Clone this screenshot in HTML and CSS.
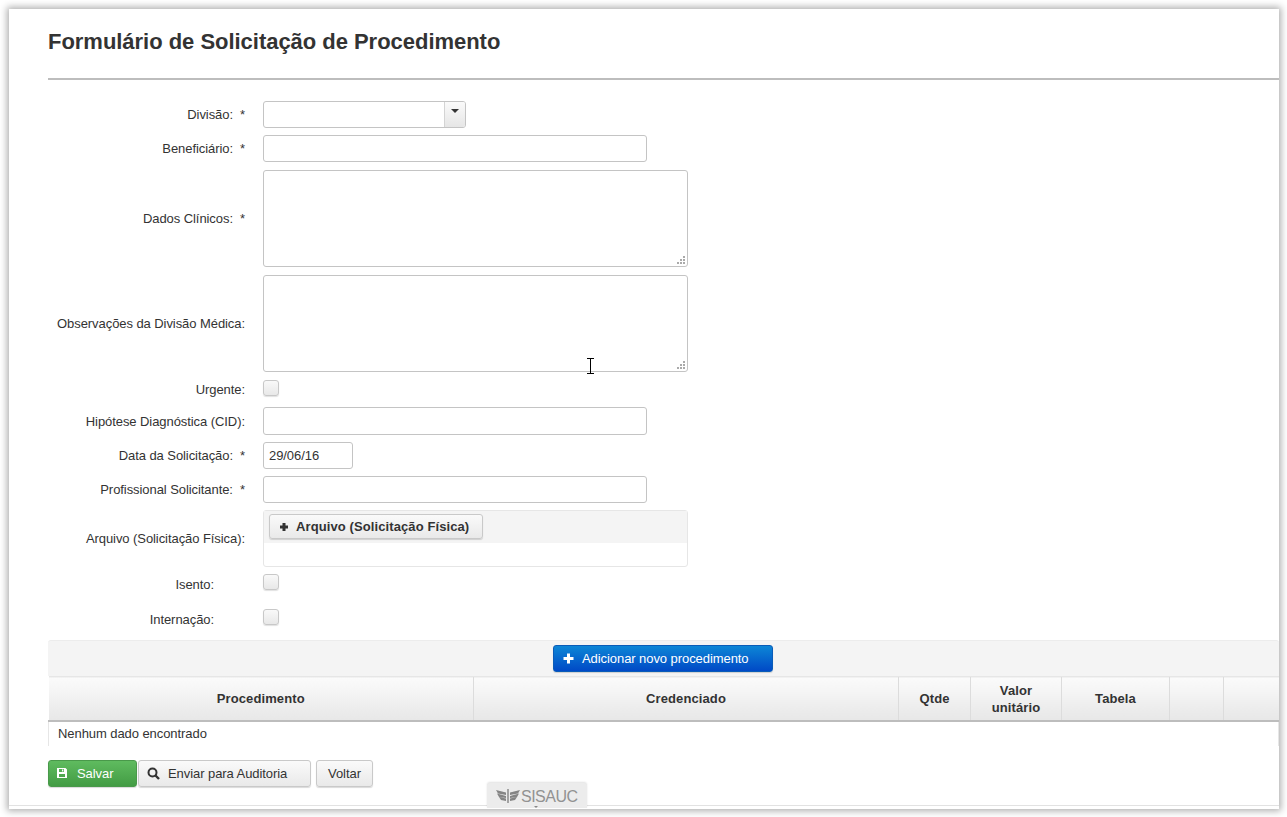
FILE: index.html
```html
<!DOCTYPE html>
<html>

<head>
    <meta charset="UTF-8">
    <title>Formulário de Solicitação de Procedimento</title>
    <link rel="stylesheet" href="styles.css">
</head>

<body>
    <div class="window">
        <h1 class="page-title">Formulário de Solicitação de Procedimento</h1>
        <div class="title-rule"></div>

        <div class="form-row">
            <label class="field-label">Divisão: &nbsp;*</label>
            <div class="combo">
                <div class="combo-text"></div>
                <div class="combo-trigger"><span class="caret"></span></div>
            </div>
        </div>
        <div class="form-row">
            <label class="field-label">Beneficiário: &nbsp;*</label>
            <input class="text-input" type="text">
        </div>
        <div class="form-row area-row">
            <label class="field-label">Dados Clínicos: &nbsp;*</label>
            <div class="area-wrap">
                <textarea class="text-area"></textarea>
                <svg class="grip" width="9" height="9" viewBox="0 0 9 9">
                    <path fill="#aaa" d="M6 0h2v2H6zM3 3h2v2H3zM6 3h2v2H6zM0 6h2v2H0zM3 6h2v2H3zM6 6h2v2H6z"/>
                </svg>
            </div>
        </div>
        <div class="form-row area-row">
            <label class="field-label">Observações da Divisão Médica:</label>
            <div class="area-wrap">
                <textarea class="text-area"></textarea>
                <svg class="grip" width="9" height="9" viewBox="0 0 9 9">
                    <path fill="#aaa" d="M6 0h2v2H6zM3 3h2v2H3zM6 3h2v2H6zM0 6h2v2H0zM3 6h2v2H3zM6 6h2v2H6z"/>
                </svg>
            </div>
        </div>
        <div class="form-row check-row">
            <label class="field-label">Urgente:</label>
            <div class="checkbox"></div>
        </div>
        <div class="form-row">
            <label class="field-label">Hipótese Diagnóstica (CID):</label>
            <input class="text-input tall-input" type="text">
        </div>
        <div class="form-row">
            <label class="field-label">Data da Solicitação: &nbsp;*</label>
            <input class="text-input date-input" type="text" value="29/06/16">
        </div>
        <div class="form-row">
            <label class="field-label">Profissional Solicitante: &nbsp;*</label>
            <input class="text-input" type="text">
        </div>
        <div class="form-row">
            <label class="field-label">Arquivo (Solicitação Física):</label>
            <div class="upload">
                <div class="upload-bar">
                    <button class="btn btn-upload">
                        <svg width="10" height="10" viewBox="0 0 10 10">
                            <path fill="#333" d="M3.5 1h3v2.5H9v3H6.5V9h-3V6.5H1v-3h2.5z"/>
                        </svg>
                        Arquivo (Solicitação Física)
                    </button>
                </div>
                <div class="upload-body"></div>
            </div>
        </div>
        <div class="form-row check-row sub-row">
            <label class="field-label short-label">Isento:</label>
            <div class="checkbox"></div>
        </div>
        <div class="form-row check-row sub-row last-row">
            <label class="field-label short-label">Internação:</label>
            <div class="checkbox"></div>
        </div>

        <div class="datatable">
            <div class="datatable-bar">
                <button class="btn btn-blue">
                    <svg width="11" height="11" viewBox="0 0 11 11">
                        <path fill="#fff" d="M4 0.5h3v3.5h3.500v3H7v3.500H4V7H0.500V4H4z"/>
                    </svg>
                    Adicionar novo procedimento
                </button>
            </div>
            <table class="grid">
                <colgroup>
                    <col class="col-proc">
                    <col class="col-cred">
                    <col class="col-qtde">
                    <col class="col-valor">
                    <col class="col-tabela">
                    <col class="col-act">
                    <col>
                </colgroup>
                <thead>
                    <tr>
                        <th>Procedimento</th>
                        <th>Credenciado</th>
                        <th>Qtde</th>
                        <th>Valor unitário</th>
                        <th>Tabela</th>
                        <th></th>
                        <th></th>
                    </tr>
                </thead>
                <tbody>
                    <tr>
                        <td colspan="7">Nenhum dado encontrado</td>
                    </tr>
                </tbody>
            </table>
        </div>

        <div class="actions">
            <button class="btn btn-green">
                <svg width="12" height="12" viewBox="0 0 12 12">
                    <path fill="#fff" fill-rule="evenodd" d="M1 1h8.500L11 2.500V11H1zM3 2v3h5V2zM3 7v3h6V7zM6 2.500h1.300v2H6z"/>
                </svg>
                Salvar
            </button>
            <button class="btn btn-search">
                <svg width="13" height="13" viewBox="0 0 13 13">
                    <circle cx="5.500" cy="5.500" r="4" fill="none" stroke="#333" stroke-width="2"/>
                    <path stroke="#333" stroke-width="2.400" d="M8.500 8.500L12 12"/>
                </svg>
                Enviar para Auditoria
            </button>
            <button class="btn btn-back">Voltar</button>
        </div>

        <div class="foot-line"></div>
    </div>

    <!-- aba fixa do rodape -->
    <div class="brand-tab">
        <svg width="24" height="14" viewBox="0 0 24 14">
            <path fill="#858585" d="M0 1l10 2.500v2.500L2 4.500zM1 4.500l9 2.500v2L3 8zM3 8l7 1.500V12L5 11z"/>
            <path fill="#858585" d="M24 1L14 3.500v2.500l8-1.500zM23 4.500L14 7v2l7-1zM21 8l-7 1.500V12l5-1z"/>
            <path fill="#858585" d="M11.300 0h1.400v14h-1.400z"/>
        </svg>
        <span>SISAUC</span>
        <i class="brand-caret"></i>
    </div>

    <!-- cursor do mouse -->
    <svg class="ibeam" width="7" height="16" viewBox="0 0 7 16">
        <path fill="none" stroke="#000" d="M0 .5h7M3.500 .5v15M0 15.500h7"/>
    </svg>
</body>

</html>
```

FILE: styles.css
```css
html, body {
    margin: 0;
    padding: 0;
    background: #fff;
    overflow: hidden;
}

body {
    height: 817px;
    font-family: "Liberation Sans", Arial, sans-serif;
    font-size: 13px;
    letter-spacing: -0.07px;
    color: #333;
}

.window {
    box-sizing: border-box;
    width: 1270px;
    height: 800px;
    margin: 9px 0 0 9px;
    padding-left: 39px;
    background: #fff;
    box-shadow: 0 0 7px 2px rgba(0, 0, 0, 0.32);
    position: relative;
}

.page-title {
    margin: 0;
    padding-top: 20px;
    height: 50px;
    box-sizing: border-box;
    font-size: 22px;
    line-height: 26px;
    font-weight: bold;
    letter-spacing: -0.03px;
    color: #333;
}

.title-rule {
    height: 2px;
    margin-top: 19px;
    margin-bottom: 21px;
    background: #bdbdbd;
}

.form-row {
    display: flex;
    align-items: center;
    gap: 18px;
    margin-bottom: 7px;
}

.area-row {
    margin-top: 8px;
}

.field-label {
    width: 197px;
    flex-shrink: 0;
    text-align: right;
    white-space: nowrap;
}

.short-label {
    width: 166px;
    margin-right: 31px;
}

.text-input {
    box-sizing: border-box;
    width: 384px;
    height: 27px;
    padding: 0 5px;
    border: 1px solid #c4c4c4;
    border-radius: 3px;
    background: #fff;
    font-family: inherit;
    font-size: 13px;
    letter-spacing: inherit;
    color: #333;
    outline: none;
}

.tall-input {
    height: 28px;
}

.date-input {
    width: 90px;
}

.combo {
    box-sizing: border-box;
    display: flex;
    width: 203px;
    height: 27px;
    border: 1px solid #c4c4c4;
    border-radius: 3px;
    overflow: hidden;
}

.combo-text {
    flex: 1;
}

.combo-trigger {
    width: 21px;
    border-left: 1px solid #d4d4d4;
    background: linear-gradient(#fafafa, #e6e6e6);
    display: flex;
    justify-content: center;
    padding-top: 7px;
    box-sizing: border-box;
}

.caret {
    width: 0;
    height: 0;
    border-left: 4px solid transparent;
    border-right: 4px solid transparent;
    border-top: 4px solid #333;
}

.area-wrap {
    position: relative;
    width: 425px;
    height: 97px;
}

.text-area {
    display: block;
    box-sizing: border-box;
    width: 100%;
    height: 100%;
    border: 1px solid #c4c4c4;
    border-radius: 3px;
    resize: none;
    outline: none;
}

.grip {
    position: absolute;
    right: 2px;
    bottom: 2px;
}

.check-row {
    height: 17px;
    margin-bottom: 10px;
    margin-top: 8px;
}

.check-row .field-label {
    padding-top: 2px;
}

.checkbox {
    box-sizing: border-box;
    width: 16px;
    height: 16px;
    margin-bottom: 1px;
    border: 1px solid #c8c8c8;
    border-radius: 3px;
    background: linear-gradient(#f9f9f9, #e8e8e8);
    box-shadow: 0 1px 1px rgba(0, 0, 0, 0.12);
}

.sub-row {
    margin-top: 0;
    margin-bottom: 18px;
}

.sub-row .field-label {
    padding-top: 4px;
}

.last-row {
    margin-bottom: 14px;
}

.upload {
    width: 425px;
    box-sizing: border-box;
    height: 57px;
    border: 1px solid #e6e6e6;
    border-radius: 3px;
}

.upload-bar {
    height: 32px;
    box-sizing: border-box;
    padding: 3px 0 0 5px;
    background: #f4f4f4;
}

.btn {
    box-sizing: border-box;
    display: inline-flex;
    align-items: center;
    height: 27px;
    padding: 0;
    border: 1px solid #c9c9c9;
    border-radius: 3px;
    background: linear-gradient(#fafafa, #e9e9e9);
    box-shadow: 0 1px 1px rgba(0, 0, 0, 0.15);
    font-family: inherit;
    font-size: 13px;
    letter-spacing: inherit;
    color: #333;
}

.btn-upload {
    width: 214px;
    height: 25px;
    padding-left: 9px;
    gap: 7px;
    font-size: 13px;
    font-weight: bold;
    letter-spacing: 0.1px;
}

.datatable-bar {
    height: 36px;
    box-sizing: border-box;
    padding: 4px 1px 0 0;
    background: #f4f4f4;
    border-top: 1px solid #ececec;
    border-radius: 3px 3px 0 0;
    display: flex;
    justify-content: center;
}

.btn-blue {
    width: 220px;
    padding-left: 9px;
    gap: 8px;
    border-color: #0a5cb8;
    background: linear-gradient(#0d86d6, #0049c6);
    color: #fff;
}

.grid {
    width: 100%;
    border-collapse: collapse;
    table-layout: fixed;
}

.col-proc { width: 425px; }
.col-cred { width: 425px; }
.col-qtde { width: 72px; }
.col-valor { width: 91px; }
.col-tabela { width: 108px; }
.col-act { width: 54px; }

.grid th {
    height: 44px;
    box-sizing: border-box;
    padding: 1px 16px 0;
    border-top: 1px solid #e6e6e6;
    border-left: 1px solid #dcdcdc;
    border-bottom: 2px solid #bdbdbd;
    background: linear-gradient(#fbfbfb, #e7e7e7);
    font-size: 13px;
    line-height: 17px;
    letter-spacing: 0.1px;
    color: #333;
}

.grid th:first-child {
    border-left: 0;
}

.grid td {
    height: 25px;
    box-sizing: border-box;
    padding: 0 9px;
    border-left: 1px solid #e6e6e6;
    border-right: 1px solid #e6e6e6;
}

.actions {
    display: flex;
    margin-top: 14px;
}

.btn-green {
    width: 89px;
    padding-left: 7px;
    gap: 9px;
    border-color: #49994a;
    background: linear-gradient(#5fbb5f, #439c44);
    color: #fff;
}

.btn-search {
    width: 173px;
    margin-left: 1px;
    padding-left: 8px;
    gap: 8px;
}

.btn-back {
    width: 57px;
    margin-left: 5px;
    justify-content: center;
}

.foot-line {
    position: absolute;
    left: 0;
    right: 0;
    bottom: 3px;
    height: 1px;
    background: #e2e2e2;
}

.brand-tab {
    position: absolute;
    left: 487px;
    top: 783px;
    width: 100px;
    height: 25px;
    box-sizing: border-box;
    padding: 6px 0 0 9px;
    display: flex;
    align-items: flex-start;
    gap: 1px;
    background: #ececec;
    border-radius: 3px 3px 0 0;
    box-shadow: 0 -1px 2px rgba(0, 0, 0, 0.12);
    font-size: 16px;
    line-height: 15px;
    letter-spacing: -0.5px;
    color: #929292;
}

.brand-caret {
    position: absolute;
    left: 47px;
    bottom: 0;
    border-left: 2px solid transparent;
    border-right: 2px solid transparent;
    border-top: 2px solid #888;
}

.ibeam {
    position: absolute;
    left: 587px;
    top: 358px;
}
```
